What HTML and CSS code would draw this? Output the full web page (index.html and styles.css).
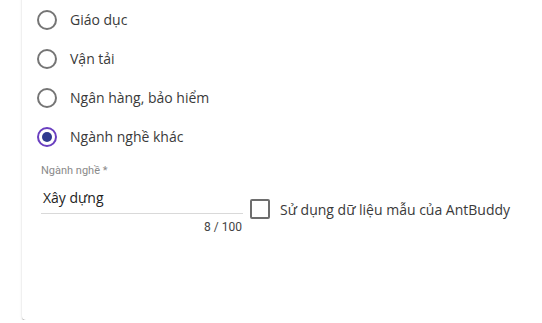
FILE: index.html
```html
<!DOCTYPE html>
<html lang="vi">
<head>
    <meta charset="UTF-8">
    <meta name="viewport" content="width=device-width, initial-scale=1.0">
    <title>Ngành nghề</title>
    <link rel="stylesheet" href="styles.css">
</head>
<body>

    <div class="card">
        <div class="radio-group">
            <label class="radio-row">
                <span class="radio"></span>
                <span class="radio-label">Giáo dục</span>
            </label>
            <label class="radio-row">
                <span class="radio"></span>
                <span class="radio-label">Vận tải</span>
            </label>
            <label class="radio-row">
                <span class="radio"></span>
                <span class="radio-label">Ngân hàng, bảo hiểm</span>
            </label>
            <label class="radio-row">
                <span class="radio checked"></span>
                <span class="radio-label">Ngành nghề khác</span>
            </label>
        </div>

        <div class="other-row">
            <div class="field">
                <div class="field-label">Ngành nghề *</div>
                <div class="field-input">Xây dựng</div>
                <div class="field-hint">8 / 100</div>
            </div>
            <label class="check-row">
                <span class="checkbox"></span>
                <span class="check-label">Sử dụng dữ liệu mẫu của AntBuddy</span>
            </label>
        </div>
    </div>

</body>
</html>
```

FILE: styles.css
```css
html, body {
    margin: 0;
    padding: 0;
    background-color: #fff;
    overflow: hidden;
}

body {
    font-family: 'Open Sans', 'Liberation Sans', sans-serif;
    color: #333;
}

.card {
    box-sizing: border-box;
    margin: -20px 0 0 22px;
    width: 560px;
    height: 340px;
    padding: 20px 0 0 15px;
    background-color: #fff;
    border-radius: 0 0 0 4px;
    box-shadow: 0 2px 1px -1px rgba(0, 0, 0, 0.25), 0 1px 1px 0 rgba(0, 0, 0, 0.16), 0 1px 3px 0 rgba(0, 0, 0, 0.12);
}

.radio-group {
    display: flex;
    flex-direction: column;
}

.radio-row {
    display: flex;
    align-items: center;
    height: 39px;
}

.radio {
    box-sizing: border-box;
    width: 20px;
    height: 20px;
    border: 2px solid #757575;
    border-radius: 50%;
    display: flex;
    align-items: center;
    justify-content: center;
}

.radio.checked {
    border-color: #6a3fc0;
}

.radio.checked::after {
    content: '';
    width: 10px;
    height: 10px;
    border-radius: 50%;
    background-color: #2f3a8f;
}

.radio-label {
    margin-left: 13px;
    font-size: 14px;
    color: #3a3a3a;
}

.other-row {
    display: flex;
    align-items: flex-start;
    margin-top: 8px;
}

.field {
    width: 202px;
    margin-left: 4px;
    font-family: Roboto, 'Liberation Sans', sans-serif;
}

.field-label {
    font-size: 11px;
    color: #8a8a8a;
    line-height: 14px;
}

.field-input {
    font-family: 'Open Sans', 'Liberation Sans', sans-serif;
    font-size: 14px;
    color: #222;
    margin-top: 10px;
    padding: 0 0 5px 2px;
    line-height: 20px;
    border-bottom: 1px solid #d9d9d9;
}

.field-hint {
    text-align: right;
    font-size: 12px;
    color: #444;
    margin-top: 6px;
    padding-right: 1px;
}

.check-row {
    display: flex;
    align-items: center;
    margin: 35px 0 0 7px;
}

.checkbox {
    box-sizing: border-box;
    width: 20px;
    height: 20px;
    border: 2px solid #6e6e6e;
    border-radius: 2px;
}

.check-label {
    margin-left: 10px;
    font-size: 14px;
    color: #3a3a3a;
}
```
